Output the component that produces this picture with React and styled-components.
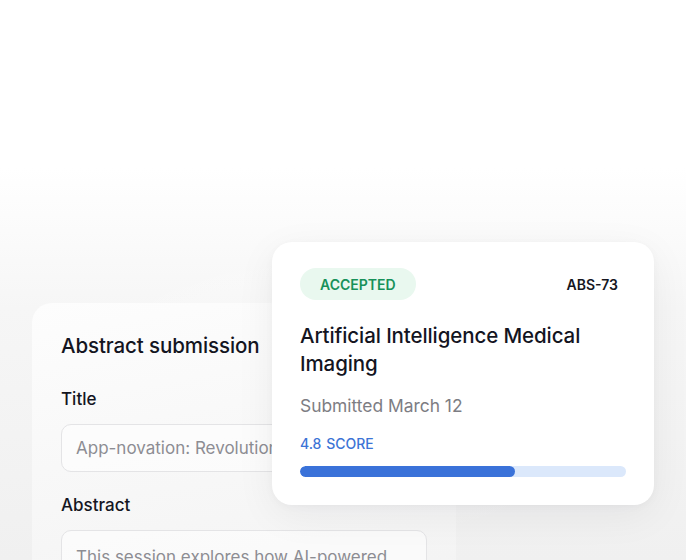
import React from "react";
import styled, { createGlobalStyle } from "styled-components";

const Global = createGlobalStyle`
  html, body { margin: 0; padding: 0; }
  body {
    font-family: Inter, "Noto Sans", sans-serif;
    -webkit-font-smoothing: antialiased;
  }
`;

const Stage = styled.div`
  position: relative;
  width: 686px;
  height: 560px;
  overflow: hidden;
  background:
    radial-gradient(ellipse 60% 40% at 50% 70%, rgba(255,255,255,0.5), rgba(255,255,255,0) 70%),
    linear-gradient(180deg, #ffffff 0%, #ffffff 30%, #f6f6f6 55%, #f0f0f0 100%);
  padding: 303px 0 0 32px;
  box-sizing: border-box;
`;

const FormCard = styled.div`
  width: 424px;
  height: 300px;
  box-sizing: border-box;
  padding: 29px 29px;
  border-radius: 20px 20px 0 0;
  background: linear-gradient(170deg, #fdfdfd 0%, #f8f8f8 45%, rgba(243,243,243,0.9) 100%);
  display: flex;
  flex-direction: column;
  & > * { flex-shrink: 0; }
`;

const FormTitle = styled.h2`
  margin: 0;
  font-size: 20.5px;
  font-weight: 500;
  color: #14151f;
  line-height: 28px;
  letter-spacing: -0.1px;
`;

const Label = styled.div`
  margin-top: ${(p) => p.$mt}px;
  font-size: 17px;
  font-weight: 500;
  color: #14151f;
  line-height: 22px;
`;

const Field = styled.div`
  margin-top: 14px;
  height: ${(p) => (p.$area ? 80 : 48)}px;
  box-sizing: border-box;
  border: 1px solid #e4e4e6;
  border-radius: 10px;
  background: rgba(255,255,255,0.5);
  padding: ${(p) => (p.$area ? "14px 14px 0" : "0 14px")};
  display: flex;
  align-items: ${(p) => (p.$area ? "flex-start" : "center")};
  font-size: 17px;
  line-height: 24px;
  color: #8d8d93;
  white-space: nowrap;
  overflow: hidden;
`;

const StatusCard = styled.div`
  position: absolute;
  left: 272px;
  top: 242px;
  width: 382px;
  box-sizing: border-box;
  padding: 26px 28px 28px;
  background: #ffffff;
  border-radius: 20px;
  box-shadow: 0 10px 40px rgba(20, 20, 40, 0.06), 0 2px 8px rgba(20, 20, 40, 0.03);
  display: flex;
  flex-direction: column;
`;

const TopRow = styled.div`
  display: flex;
  align-items: center;
  justify-content: space-between;
  padding-right: 8px;
`;

const Pill = styled.span`
  display: inline-flex;
  align-items: center;
  height: 32px;
  padding: 0 20px;
  border-radius: 16px;
  background: #e9f8ef;
  color: #17915a;
  font-size: 14px;
  font-weight: 600;
  letter-spacing: 0;
`;

const Code = styled.span`
  font-size: 14px;
  font-weight: 600;
  color: #16171f;
`;

const CardTitle = styled.h3`
  margin: 22px 0 0;
  font-size: 20.5px;
  font-weight: 500;
  line-height: 28px;
  color: #14151f;
  letter-spacing: -0.1px;
`;

const Sub = styled.div`
  margin-top: 16px;
  font-size: 17.4px;
  color: #7d7d83;
  line-height: 24px;
`;

const Score = styled.div`
  margin-top: 17px;
  font-size: 14px;
  font-weight: 500;
  color: #3c74d6;
  line-height: 18px;
  word-spacing: 1px;
`;

const Track = styled.div`
  margin-top: 13px;
  height: 11px;
  border-radius: 6px;
  background: #dbe8fb;
  overflow: hidden;
`;

const Fill = styled.div`
  height: 100%;
  border-radius: 6px;
  background: #3a72d9;
`;

export default function App() {
  const score = 4.8;
  const pct = 66;
  return (
    <>
      <Global />
      <Stage>
        <FormCard>
          <FormTitle>Abstract submission</FormTitle>
          <Label $mt={28}>Title</Label>
          <Field>App-novation: Revolutionizing Healthcare</Field>
          <Label $mt={22}>Abstract</Label>
          <Field $area>This session explores how AI-powered</Field>
        </FormCard>
        <StatusCard>
          <TopRow>
            <Pill>ACCEPTED</Pill>
            <Code>ABS-73</Code>
          </TopRow>
          <CardTitle>Artificial Intelligence Medical Imaging</CardTitle>
          <Sub>Submitted March 12</Sub>
          <Score>{`${score} SCORE`}</Score>
          <Track>
            <Fill style={{ width: `${pct}%` }} />
          </Track>
        </StatusCard>
      </Stage>
    </>
  );
}
